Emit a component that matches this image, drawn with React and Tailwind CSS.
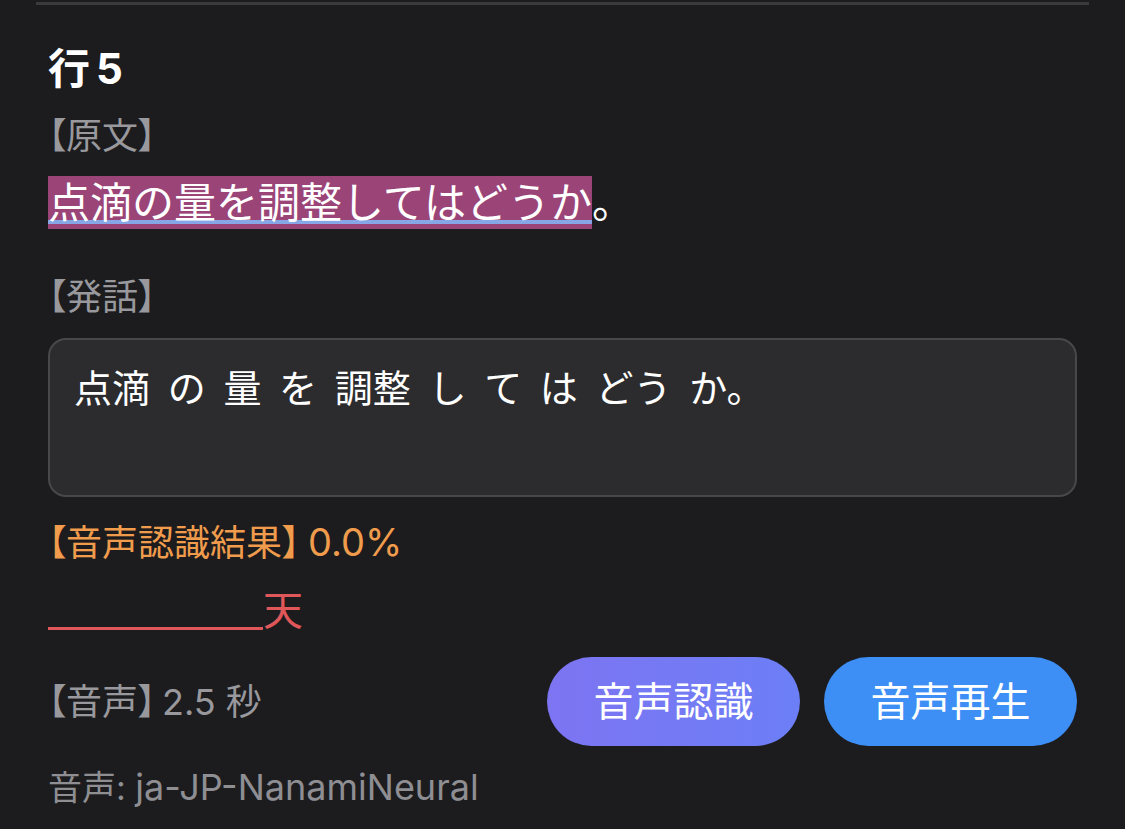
import React from 'react';

const jp = { fontFamily: 'Inter, "Noto Sans CJK JP", "Noto Sans", sans-serif' };

const App = () => {
  return (
    <div className="min-h-[829px] bg-[#1c1c1e] overflow-hidden" style={jp}>
      <div className="mx-[36px] mt-[2px] h-[3px] bg-[#3a3a3c]" />

      <div className="px-[48px]">
        <h2 className="mt-[43px] text-[42px] leading-[42px] font-bold text-white">
          行<span className="ml-[6px]">5</span>
        </h2>

        <p className="mt-[28px] text-[36px] leading-[36px] text-[#98989d] [font-feature-settings:'palt']">【原文】</p>

        <p className="mt-[22px] text-[42px] leading-[53px] text-white">
          <span className="inline-block bg-[#9b4478] underline decoration-[#86a6e6] decoration-[4px] underline-offset-[2px]">
            点滴の量を調整してはどうか
          </span>
          。
        </p>

        <p className="mt-[50px] text-[36px] leading-[36px] text-[#98989d] [font-feature-settings:'palt']">【発話】</p>

        <div className="mt-[23px] h-[159px] rounded-[18px] border-2 border-[#48484a] bg-[#2c2c2e] px-[24px] pt-[28px]">
          <p className="text-[38px] leading-[40px] text-white [word-spacing:7px]">点滴 の 量 を 調整 し て は どう か。</p>
        </div>

        <p className="mt-[27px] text-[36px] leading-[36px] text-[#f09c4c] [font-feature-settings:'palt']">
          【音声認識結果】<span className="ml-[8px] text-[38px]">0.0%</span>
        </p>

        <div className="mt-[30px] flex items-end">
          <span className="mb-[1px] inline-block w-[215px] h-[3px] bg-[#e0575a]" />
          <span className="text-[40px] leading-[40px] text-[#e0575a]">天</span>
        </div>

        <div className="mt-[26px] flex items-center justify-between">
          <span className="text-[36px] leading-[36px] text-[#98989d] [font-feature-settings:'palt']">
            【音声】<span className="ml-[6px]">2.5 秒</span>
          </span>
          <div className="flex gap-[24px]">
            <button className="h-[89px] w-[253px] rounded-full bg-gradient-to-r from-[#7d74f2] to-[#6c7ff6] text-[40px] text-white">
              音声認識
            </button>
            <button className="h-[89px] w-[253px] rounded-full bg-[#3d8ef5] text-[40px] text-white">
              音声再生
            </button>
          </div>
        </div>

        <p className="mt-[24px] text-[34px] leading-[34px] text-[#8e8e93]">
          音声: <span className="text-[36px]">ja-JP-NanamiNeural</span>
        </p>
      </div>
    </div>
  );
};

export default App;
